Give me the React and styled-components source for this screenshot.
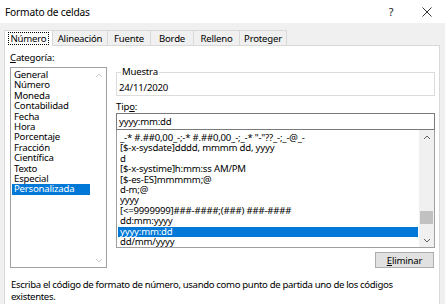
import styled, { createGlobalStyle } from "styled-components";

const Global = createGlobalStyle`
  html, body { margin: 0; padding: 0; background: #f0f0f0; }
  body {
    font-family: "Segoe UI", "Noto Sans", "DejaVu Sans", sans-serif;
    color: #000;
    letter-spacing: -0.2px;
  }
`;

const Window = styled.div`
  width: 445px;
  height: 304px;
  background: #f0f0f0;
  display: flex;
  flex-direction: column;
  overflow: hidden;
  font-size: 9.6px;
`;

const TitleBar = styled.div`
  height: 23px;
  background: #fff;
  display: flex;
  align-items: center;
  padding-left: 5px;
  font-size: 10.2px;
`;

const Title = styled.span`
  flex: 1;
`;

const TitleButton = styled.span`
  width: 36px;
  display: flex;
  justify-content: center;
  align-items: center;
  color: #222;
  font-size: 11px;
`;

const TabRow = styled.div`
  display: flex;
  padding-left: 4px;
  margin-top: 7px;
  height: 15px;
`;

const Tab = styled.div`
  width: ${(p) => p.$w}px;
  height: 16px;
  box-sizing: border-box;
  display: flex;
  align-items: center;
  justify-content: center;
  border: 1px solid #d9d9d9;
  border-left: ${(p) => (p.$first ? "1px solid #d9d9d9" : "none")};
  border-bottom: ${(p) => (p.$active ? "none" : "1px solid #d9d9d9")};
  background: ${(p) => (p.$active ? "#fff" : "#f0f0f0")};
  position: relative;
  z-index: 1;
`;

const Focus = styled.span`
  outline: 1px dotted #000;
  outline-offset: 0;
  padding: 0 2px;
  line-height: 11px;
`;

const Panel = styled.div`
  flex: 1;
  margin: 0 5px 0 4px;
  background: #fff;
  border: 1px solid #d9d9d9;
  border-bottom: none;
  padding: 6px 0 0 5px;
  display: flex;
  flex-direction: column;
`;

const Columns = styled.div`
  display: flex;
  gap: 9px;
`;

const LeftCol = styled.div`
  width: 97px;
  display: flex;
  flex-direction: column;
`;

const Label = styled.div`
  height: ${(p) => p.$h || 14}px;
  line-height: 12px;
  padding-top: ${(p) => p.$top || 0}px;
  box-sizing: border-box;
`;

const ListBox = styled.div`
  border: 1px solid #a0a0a0;
  border-top: ${(p) => (p.$noTop ? "none" : "1px solid #a0a0a0")};
  height: ${(p) => p.$h}px;
  box-sizing: border-box;
  display: flex;
  overflow: hidden;
  background: #fff;
`;

const Items = styled.div`
  flex: 1;
  padding: ${(p) => p.$top || 2}px 1px 0 1px;
  overflow: hidden;
`;

const Item = styled.div`
  height: 10.4px;
  line-height: 10.4px;
  padding-left: 2px;
  white-space: nowrap;
  background: ${(p) => (p.$sel ? "#0078d7" : "transparent")};
  color: ${(p) => (p.$sel ? "#fff" : "#000")};
`;

const ScrollBar = styled.div`
  width: 15px;
  background: ${(p) => (p.$active ? "#f0f0f0" : "#fff")};
  display: flex;
  flex-direction: column;
  align-items: center;
  justify-content: space-between;
  position: relative;
`;

const Arrow = styled.div`
  height: 14px;
  display: flex;
  align-items: center;
  justify-content: center;
`;

const Thumb = styled.div`
  position: absolute;
  left: 1px;
  right: 1px;
  top: ${(p) => p.$top}px;
  height: ${(p) => p.$h}px;
  background: #c1c1c1;
`;

const RightCol = styled.div`
  width: 319px;
  display: flex;
  flex-direction: column;
`;

const Fieldset = styled.div`
  margin-top: 20px;
  border: 1px solid #dcdcdc;
  height: 24px;
  box-sizing: border-box;
  position: relative;
  padding: 9px 0 0 2px;
  line-height: 11px;
`;

const Legend = styled.span`
  position: absolute;
  top: -7px;
  left: 4px;
  background: #fff;
  padding: 0 1px;
`;

const Input = styled.div`
  border: 1px solid #7a7a7a;
  height: 17px;
  box-sizing: border-box;
  padding-left: 2px;
  line-height: 15px;
`;

const ButtonRow = styled.div`
  display: flex;
  justify-content: flex-end;
  margin-top: 4px;
  padding-right: 1px;
`;

const Button = styled.div`
  width: 59px;
  height: 16px;
  box-sizing: border-box;
  background: #e1e1e1;
  border: 1px solid #adadad;
  display: flex;
  align-items: center;
  justify-content: center;
`;

const Description = styled.div`
  margin-top: 11px;
  padding-left: 1px;
  line-height: 12px;
  width: 422px;
  letter-spacing: -0.35px;
`;

const Chevron = ({ up, color }) => (
  <svg width="8" height="5" viewBox="0 0 8 5">
    <path
      d={up ? "M1 4 L4 1 L7 4" : "M1 1 L4 4 L7 1"}
      stroke={color}
      strokeWidth="1"
      fill="none"
    />
  </svg>
);

const categories = [
  "General",
  "Número",
  "Moneda",
  "Contabilidad",
  "Fecha",
  "Hora",
  "Porcentaje",
  "Fracción",
  "Científica",
  "Texto",
  "Especial",
  "Personalizada",
];

const formats = [
  '_-* #.##0,00_-;-* #.##0,00_-;_-* "-"??_-;_-@_-',
  "[$-x-sysdate]dddd, mmmm dd, yyyy",
  "d",
  "[$-x-systime]h:mm:ss AM/PM",
  "[$-es-ES]mmmmm;@",
  "d-m;@",
  "yyyy",
  "[<=9999999]###-####;(###) ###-####",
  "dd:mm:yyyy",
  "yyyy:mm:dd",
  "dd/mm/yyyy",
];

export default function App() {
  return (
    <Window>
      <Global />
      <TitleBar>
        <Title>Formato de celdas</Title>
        <TitleButton>?</TitleButton>
        <TitleButton>
          <svg width="10" height="10" viewBox="0 0 10 10">
            <path d="M0.5 0.5 L9.5 9.5 M9.5 0.5 L0.5 9.5" stroke="#333" strokeWidth="1" />
          </svg>
        </TitleButton>
      </TitleBar>
      <TabRow>
        <Tab $active $first $w={49}>
          <Focus>Número</Focus>
        </Tab>
        <Tab $w={55}>Alineación</Tab>
        <Tab $w={43}>Fuente</Tab>
        <Tab $w={43}>Borde</Tab>
        <Tab $w={46}>Relleno</Tab>
        <Tab $w={47}>Proteger</Tab>
      </TabRow>
      <Panel>
        <Columns>
          <LeftCol>
            <Label $h={15}>
              <u>C</u>ategoría:
            </Label>
            <ListBox $h={201}>
              <Items $top={2}>
                {categories.map((c) => (
                  <Item key={c} $sel={c === "Personalizada"}>
                    {c}
                  </Item>
                ))}
              </Items>
              <ScrollBar>
                <Arrow>
                  <Chevron up color="#c8c8c8" />
                </Arrow>
                <Arrow>
                  <Chevron color="#c8c8c8" />
                </Arrow>
              </ScrollBar>
            </ListBox>
          </LeftCol>
          <RightCol>
            <Fieldset>
              <Legend>Muestra</Legend>
              24/11/2020
            </Fieldset>
            <Label $h={17} $top={5}>
              Tip<u>o</u>:
            </Label>
            <Input>yyyy:mm:dd</Input>
            <ListBox $h={118} $noTop>
              <Items $top={3}>
                {formats.map((f) => (
                  <Item key={f} $sel={f === "yyyy:mm:dd"}>
                    {f}
                  </Item>
                ))}
              </Items>
              <ScrollBar $active>
                <Arrow>
                  <Chevron up color="#606060" />
                </Arrow>
                <Thumb $top={81} $h={13} />
                <Arrow>
                  <Chevron color="#606060" />
                </Arrow>
              </ScrollBar>
            </ListBox>
            <ButtonRow>
              <Button>
                <span>
                  <u>E</u>liminar
                </span>
              </Button>
            </ButtonRow>
          </RightCol>
        </Columns>
        <Description>
          Escriba el código de formato de número, usando como punto de partida uno de los códigos existentes.
        </Description>
      </Panel>
    </Window>
  );
}
